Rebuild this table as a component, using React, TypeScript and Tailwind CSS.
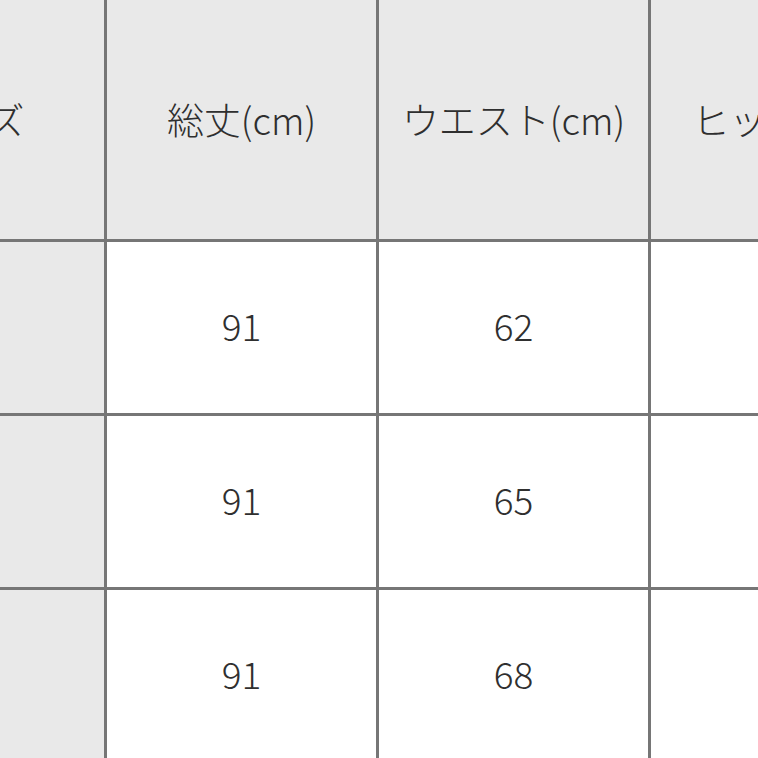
const headers = ['サイズ', '総丈(cm)', 'ウエスト(cm)', 'ヒップ(cm)'];

const rows = [
  ['S', '91', '62', '88'],
  ['M', '91', '65', '91'],
  ['L', '91', '68', '94'],
];

export default function App() {
  return (
    <div
      className="w-[758px] h-[758px] overflow-hidden bg-white text-[#2f2f2f]"
      style={{ fontFamily: '"Noto Sans CJK JP", "Noto Sans", sans-serif' }}
    >
      <div className="ml-[-165px] w-max grid grid-cols-[269px_269px_269px_269px] gap-[3px] bg-[#767676] pr-[3px] pb-[3px]">
        {headers.map((h) => (
          <div key={h} className="h-[239px] bg-[#e9e9e9] flex items-center justify-center text-[37px] font-light leading-none">
            {h}
          </div>
        ))}
        {rows.map((row, i) =>
          row.map((cell, j) => (
            <div
              key={`${i}-${j}`}
              className={`h-[171px] flex items-center justify-center text-[37px] font-light leading-none pb-[4px] ${
                j === 0 ? 'bg-[#e9e9e9]' : 'bg-white'
              }`}
            >
              {cell}
            </div>
          ))
        )}
      </div>
    </div>
  );
}
